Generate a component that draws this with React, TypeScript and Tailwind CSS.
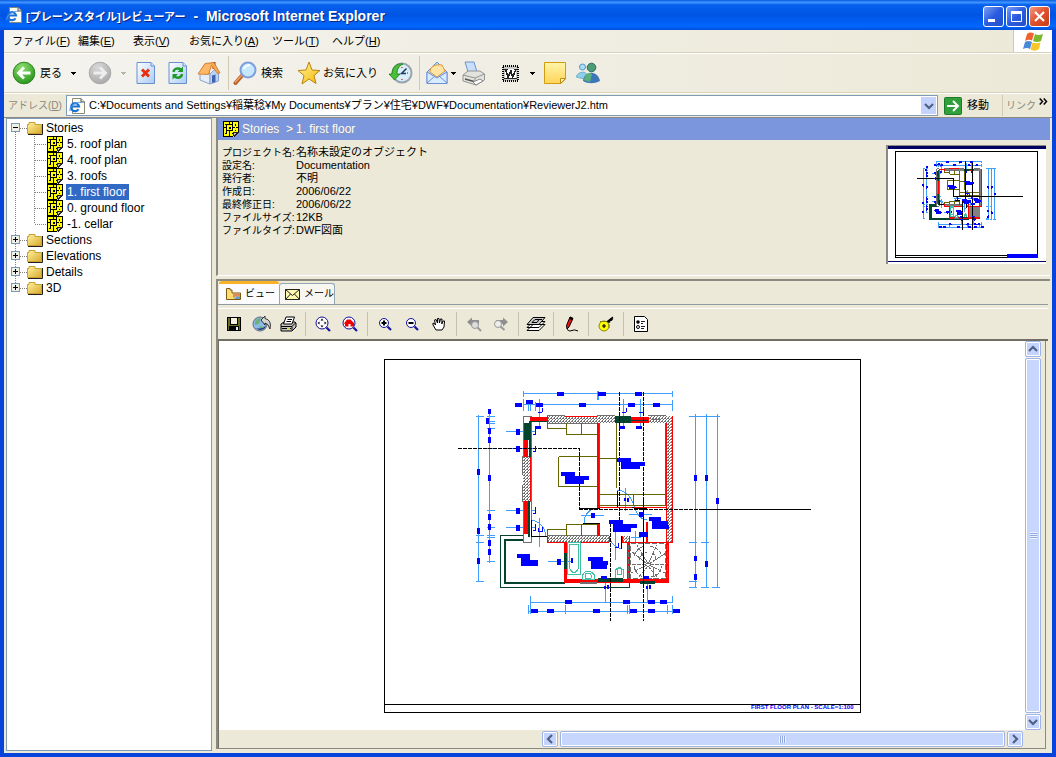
import React from "react";

type Box = [number, number, number, number];

/* ---------- floor plan ---------- */

const DIM = "#3f9fff";
const GREEN = "#04432f";
const OLIVE = "#666600";
const TEAL = "#40bfa5";

const smallTags: Box[] = [
  [557, 392, 7, 4], [598, 392, 8, 4], [635, 392, 7, 4], [515, 403, 7, 4], [526, 400, 7, 4], [536, 403, 7, 4],
  [579, 403, 7, 4], [628, 403, 7, 4], [653, 403, 7, 4], [535, 426, 6, 3], [619, 426, 6, 3], [636, 426, 6, 3],
  [477, 469, 3, 6], [477, 528, 3, 6], [477, 558, 3, 6], [488, 409, 3, 5], [486, 418, 3, 6], [488, 428, 3, 6],
  [488, 437, 3, 6], [488, 475, 3, 6], [488, 514, 3, 6], [488, 524, 3, 6], [488, 540, 3, 6], [488, 549, 3, 6],
  [516, 429, 4, 6], [516, 446, 4, 6], [516, 508, 4, 6], [516, 525, 4, 6], [557, 559, 4, 6], [571, 558, 2, 5],
  [694, 475, 3, 6], [705, 475, 3, 6], [716, 498, 3, 6], [694, 556, 3, 5], [705, 561, 3, 6], [694, 574, 3, 6],
  [565, 600, 7, 4], [623, 600, 7, 4], [648, 600, 7, 4], [660, 600, 7, 4], [531, 609, 7, 4], [547, 609, 7, 4],
  [593, 609, 7, 4], [630, 609, 7, 4], [648, 609, 7, 4], [673, 609, 7, 4], [601, 576, 6, 3], [643, 576, 6, 3],
  [591, 513, 4, 5], [639, 512, 5, 5], [639, 532, 9, 5], [604, 586, 2, 3], [607, 585, 2, 4], [646, 586, 2, 3],
  [649, 585, 2, 4], [624, 498, 2, 3], [627, 498, 2, 4],
];

const roomTags: Box[] = [
  [561, 472, 14, 4], [565, 476, 24, 4], [565, 480, 19, 4], [617, 458, 14, 4], [621, 462, 24, 4], [621, 466, 19, 3],
  [517, 554, 13, 4], [521, 558, 9, 4], [521, 560, 17, 6], [588, 557, 15, 4], [591, 561, 17, 4], [591, 564, 16, 5],
  [609, 520, 14, 4], [613, 524, 24, 4], [613, 528, 18, 4], [649, 517, 12, 4], [652, 521, 16, 4], [652, 525, 17, 4],
];

const dimPath = [
  "M523 393.5H673M523 404.5H673M523.5 391V397M523.5 399V411M528.5 404V411M530.5 404V411M535.5 402V411",
  "M597.5 391V400M598.5 391V400M672.5 391V397M672.5 400V411M539.5 399V428M623.5 399V427M640.5 399V427",
  "M478.5 415V582M476 416.5H484M476 535.5H484M476 542.5H484M476 581.5H484",
  "M489.5 409V563M487 416.5H495M487 421.5H495M487 423.5H495M487 428.5H495M487 448.5H495M487 510.5H495M487 527.5H495M487 535.5H495M487 537.5H495M487 561.5H495",
  "M506 431.5H536M506 448.5H536M506 510.5H536M506 527.5H536M539.5 518V547M548 561.5H572",
  "M695.5 414V588M706.5 414V588M717.5 414V588",
  "M689 416.5H720M689 542.5H697M701 542.5H709M689 581.5H697M689 587.5H697M701 587.5H709M712 587.5H720",
  "M530 602.5H673M528 611.5H680M530.5 596V614M528.5 605V614M565.5 605V614M605.5 579V603M647.5 579V603M672.5 596V603M627.5 605V614M629.5 605V614M667.5 605V614M672.5 605V614",
  "M581 515.5H604M629 514.5H652M625.5 488V511M615.5 532V560M635.5 531V542M631 537.5H641",
  "M531 520Q544 522 546 536M584 523Q584 510 598 508M617 490Q628 490 634 505Q638 520 647 520M609 536Q611 546 621 549",
].join("");

const hookPath =
  "M538 412.5H542M542.5 408V412M622 412.5H626M626.5 408V412M639 412.5H643M643.5 408V412M533 434.5H536M535.5 429V434M533 451.5H536M535.5 446V451M533 513.5H536M535.5 507V513M533 530.5H536M535.5 524V530M538 531.5H543M542.5 527V531M538.5 528V531M615 547.5H619M618.5 543V547";

const stairPath =
  "M648 564L637 545M648 564L657 545M647 564L631 551M649 564L666 553M646 564H630M650 564H666M647 565L631 573M649 565L665 573M648 566L637 579M648 566L659 579M643.5 568V579M653.5 568V579M634 556Q637 548 645 546M650 546Q659 548 662 556M634 566Q636 576 645 577M651 577Q660 576 662 566M639 560Q641 553 647 552M656 560Q655 553 650 552";

function Plan({ small, className }: { small?: boolean; className: string }) {
  const hatched: Box[] = [
    [523, 456, 8, 45], [547, 416, 51, 7], [598, 416, 17, 7], [649, 416, 23, 7], [666, 423, 6, 119],
    [547, 536, 62, 6], [622, 536, 7, 6],
  ];
  return (
    <svg
      viewBox="384 359 477 354"
      className={className}
      shapeRendering="crispEdges"
      fill="none"
      role="img"
      aria-label="First floor plan"
    >
      <defs>
        <pattern id="hatch" width="3" height="3" patternUnits="userSpaceOnUse">
          <rect width="3" height="3" fill="#fff" />
          <path d="M2 0h1v1h-1zM1 1h1v1h-1zM0 2h1v1h-1zM2 1h1v1h-1z" fill="#707070" />
        </pattern>
      </defs>
      <rect x="384.5" y="359.5" width="476" height="353" fill="#fff" stroke="#000" />
      <path d="M384 704.5H861" stroke="#000" />
      <path d="M523.5 535.5H500.5V587.5H629.5V583" stroke={GREEN} />
      <path d="M523 540H505V583H565" stroke={GREEN} strokeWidth="2" />
      <path d={dimPath} stroke={DIM} />
      <rect x="523.5" y="416.5" width="8" height="126" stroke="#707070" fill="#fff" />
      {hatched.map((b, i) => (
        <rect key={i} x={b[0]} y={b[1]} width={b[2]} height={b[3]} fill={small ? "#808080" : "url(#hatch)"} />
      ))}
      <path d="M547 415.5H565M597 415.5H615M648 415.5H666M522.5 456V475M522.5 485V502M531 456.5H523M531 501.5H523M547 423.5H598M547 535.5H609" stroke="#707070" />
      <path d="M565 416.5H597M666.5 423V542M672.5 416V543M530.5 457V501M547 542.5H609M622 542.5H672M547.5 416V423M547.5 536V542M600 507.5H666M609.5 536V542M622.5 536V542M629.5 536V542" stroke="#f00" />
      <path d="M600 505.5H617M633 505.5H666M651 419.5H660" stroke="#707070" />
      <path d="M524 423h6v17h-6zM529 421h2v36h-2zM528 501h2v36h-2zM530 421h17v1h-17zM615 416h16v7h-16z" fill={GREEN} />
      <path d="M524 440h4v17h-4zM530 417h17v4h-17zM524 501h4v33h-4zM631 417h18v6h-18zM597 423h3v85h-3zM597 524h3v12h-3zM646 522h2v20h-2zM564 542h3v40h-3zM564 579h105v4h-105zM666 542h3v41h-3zM627 542h3v38h-3z" fill="#f00" />
      <path d="M564 553h3v16h-3zM598 578h25v4h-25zM640 581h15v3h-15z" fill={GREEN} />
      <path d="M631 420.5H648" stroke={GREEN} />
      <path d="M580 582h17v2h-17z" fill="#707070" />
      <path
        d="M558.5 456.5H597M558.5 456.5V486.5H597M566.5 423V434.5H597M581.5 423V434M547.5 423V428.5H566M566.5 536V524.5H597M581.5 524V536M547.5 535V529.5H566M599.5 423V505M616.5 423V488M600 458.5H616M600 494.5H666M600 505.5H666M633.5 494V505M665.5 423V505"
        stroke={OLIVE}
      />
      <rect x="630" y="543" width="36" height="36" fill={small ? "#808080" : "#fff"} />
      {!small && (
        <>
          <path d="M630.5 543.5H665.5V578.5H630.5ZM628.5 545V578M667.5 545V578" stroke="#707070" strokeDasharray="5 2" />
          <path d={stairPath} stroke="#707070" strokeDasharray="4 1" />
        </>
      )}
      <path
        d="M567.5 542.5H580.5V574.5H567.5ZM569.5 544.5H578.5V568Q574 577 569.5 568ZM582.5 579V575Q588 567 594.5 575V579ZM585.5 578Q584 573 588 573Q592 573 591 578ZM615.5 578V570Q619 565 623.5 570V578M617.5 574H621.5V568H617.5Z"
        stroke={TEAL}
      />
      <path d="M531.5 520V536.5H547M583 523.5H600M617.5 491V507M632 507.5H634M621.5 536V549M634 508.5H647M600 508.5H580" stroke="#000" />
      <path d="M458 448.5H579.5V509.5M579 509.5H700M619.5 392V523.5H610.5V621M643.5 392V497M643.5 574V621" stroke="#000" strokeDasharray={small ? undefined : "4 1"} />
      <path d="M700 509.5H811M643.5 497V574" stroke="#000" />
      <g fill="#00f" stroke={small ? "#00f" : "none"} strokeWidth="1">
        {smallTags.map((b, i) => (
          <rect key={i} x={b[0]} y={b[1]} width={b[2]} height={b[3]} />
        ))}
        {roomTags.map((b, i) => (
          <rect key={i} x={b[0]} y={b[1]} width={b[2]} height={b[3]} />
        ))}
      </g>
      {small ? (
        <rect x="758" y="704" width="102" height="8" fill="#00f" stroke="#00f" />
      ) : (
        <>
          <path d={hookPath} stroke="#00f" />
          <text x="751" y="709" fill="#00f" className="font-['Liberation_Sans'] text-[6px] font-bold">
            FIRST FLOOR PLAN - SCALE=1:100
          </text>
        </>
      )}
    </svg>
  );
}

/* ---------- icons ---------- */

const PageE = () => (
  <svg width="16" height="16" viewBox="0 0 16 16" className="shrink-0">
    <path d="M3.500.5H12L15.500 4V15.500H3.500Z" fill="#fffef0" stroke="#8a8a7a" />
    <path d="M12 .5V4H15.500" fill="#ddd" stroke="#555" />
    <path d="M9.500 11.200A4 4 0 1 1 10 8.500H3.500" fill="none" stroke="#1c6fd8" strokeWidth="2.200" />
    <path d="M1 13C-1 9 8 3 12 4.500" fill="none" stroke="#4aa0ee" />
  </svg>
);

const PlanIcon = () => (
  <svg width="16" height="16" viewBox="0 0 16 16" className="shrink-0" shapeRendering="crispEdges" fill="none">
    <path d="M0 0H16V11L11 16H0Z" fill="#000" />
    <path d="M1 1H15V11L10 15H1Z" fill="#ff0" />
    <path d="M3.500 3.500H9.500V9.500H3.500ZM6.500 1V3M6.500 10V15M1 6.500H3M10 6.500H12M13 6.500H15M9.500 3V1M3.500 10V12" stroke="#000" />
    <path d="M6 6h2v2h-2zM2 3h1v1h-1zM12 3h1v2h-1zM2 12h2v1h-2zM9 12h1v1h-1zM12 9h1v1h-1z" fill="#000" />
    <path d="M10 16V11H16Z" fill="#c8c8c8" />
    <path d="M10.500 15V11.500H15M11 15.500L15.500 11" stroke="#222" />
  </svg>
);

const Folder = () => (
  <svg width="16" height="14" viewBox="0 0 16 14" className="shrink-0">
    <defs>
      <linearGradient id="fold" x1="0" y1="0" x2="1" y2="1">
        <stop offset="0" stopColor="#fff3a0" />
        <stop offset="1" stopColor="#d9a92c" />
      </linearGradient>
    </defs>
    <path d="M1 13.500H15.500V3" stroke="#222" fill="none" />
    <path d="M.5 12.500V3.500L2 3.500V1.500H8V3.500H14.500V12.500Z" fill="url(#fold)" stroke="#c9a030" />
  </svg>
);

const Caret = ({ dim }: { dim?: boolean }) => (
  <svg width="5" height="3" viewBox="0 0 5 3" className="shrink-0" shapeRendering="crispEdges">
    <path d="M0 0H5V1H4V2H3V3H2V2H1V1H0Z" fill={dim ? "#b8b5a6" : "#000"} />
  </svg>
);

const RoundArrow = ({ forward }: { forward?: boolean }) => (
  <svg width="24" height="24" viewBox="0 0 24 24" className="shrink-0">
    <defs>
      <radialGradient id={forward ? "ra1" : "ra0"} cx=".4" cy=".25" r=".8">
        <stop offset="0" stopColor={forward ? "#d8d8d8" : "#8be070"} />
        <stop offset="1" stopColor={forward ? "#a8a8a8" : "#259418"} />
      </radialGradient>
    </defs>
    <circle cx="12" cy="12" r="10.800" fill={`url(#${forward ? "ra1" : "ra0"})`} stroke={forward ? "#aaa" : "#2c8420"} />
    <path
      d={forward ? "M5.500 12H17M12 6.500L17.500 12L12 17.500" : "M18.500 12H7M12 6.500L6.500 12L12 17.500"}
      fill="none"
      stroke={forward ? "#eee" : "#fff"}
      strokeWidth="2.800"
    />
  </svg>
);

const Sheet = ({ children }: { children: React.ReactNode }) => (
  <svg width="20" height="24" viewBox="0 0 20 24">
    <defs>
      <linearGradient id="sheet" x1="0" y1="0" x2="1" y2="1">
        <stop offset="0" stopColor="#fff" />
        <stop offset="1" stopColor="#a9ccf5" />
      </linearGradient>
    </defs>
    <path d="M1 1.500H15L18.500 5V22.500H1Z" fill="url(#sheet)" stroke="#6a8fd0" />
    <path d="M15 1.500V5H18.500" fill="#d5e5ff" stroke="#6a8fd0" />
    {children}
  </svg>
);

const Home = () => (
  <svg width="24" height="24" viewBox="0 0 24 24">
    <path d="M15.500 1H18.500V8H15.500Z" fill="#c33a1c" />
    <path d="M3 13L9 6L13 13V23L3 19Z" fill="#e6eefc" stroke="#8ca2cc" />
    <path d="M13 13L18 8L21.500 12V20L13 23Z" fill="#bcd3f4" stroke="#8ca2cc" />
    <path d="M15 14.500L18.500 13.500V21L15 22Z" fill="#3e64b0" />
    <path d="M1 13L8 2.500L17 1.500L23 12L20.500 12.500L14.500 4.500L11.500 13.500Z" fill="#f5a84c" stroke="#c4742c" strokeWidth=".8" />
    <path d="M2 12.500L8.500 3.500L14 3L11 12.500Z" fill="#ffb866" />
  </svg>
);

const Search = () => (
  <svg width="24" height="24" viewBox="0 0 24 24" className="shrink-0">
    <path d="M9.500 14L2.500 22" stroke="#b8622c" strokeWidth="4" strokeLinecap="round" />
    <path d="M9 14L2.500 21" stroke="#f0a060" strokeWidth="1.500" strokeLinecap="round" />
    <circle cx="15" cy="9" r="7.500" fill="#c6e8ff" stroke="#7f9fdc" strokeWidth="2" />
    <path d="M11 8A5 5 0 0 1 17 4.500" stroke="#fff" strokeWidth="2" fill="none" />
  </svg>
);

const Star = () => (
  <svg width="24" height="24" viewBox="0 0 24 24" className="shrink-0">
    <defs>
      <linearGradient id="star" x1="0" y1="0" x2="1" y2="1">
        <stop offset="0" stopColor="#fff6a0" />
        <stop offset="1" stopColor="#f7b500" />
      </linearGradient>
    </defs>
    <path d="M12 1L15 9L23 9.500L17 14.500L19 22.500L12 18L5 23L7 14.500L1 9.500L9 9Z" fill="url(#star)" stroke="#b88410" strokeLinejoin="round" />
  </svg>
);

const History = () => (
  <svg width="25" height="24" viewBox="0 0 25 24">
    <circle cx="14" cy="12" r="9.500" fill="#d8eef8" stroke="#98a4b0" strokeWidth="2" />
    <path d="M14 6V7M19 12H20M14 18V19" stroke="#e04020" strokeWidth="1.500" />
    <path d="M18.500 7.500L13.500 12.500H18" stroke="#223a60" strokeWidth="1.500" fill="none" />
    <path d="M1 13H4C4 6 9 2 15 3C11 5 9 8 9 13H12L6.500 19Z" fill="#4bbf3c" stroke="#1d7a18" strokeWidth=".8" />
  </svg>
);

const Mail = () => (
  <svg width="22" height="24" viewBox="0 0 22 24">
    <path d="M1 11L11 1L21 11V22.500H1Z" fill="#b6d8fb" stroke="#6f8fd8" />
    <path d="M4 11C4 5 10 3 16 4L19 10L11 16Z" fill="#ffe4a8" stroke="#dc9a38" />
    <path d="M1 11L11 17L21 11V22.500H1Z" fill="#d8ecff" stroke="#6f8fd8" />
    <path d="M1 22L9 15M21 22L13 15" stroke="#6f8fd8" />
  </svg>
);

const Printer = () => (
  <svg width="24" height="25" viewBox="0 0 24 25">
    <path d="M3 1L12 1L15 11H6Z" fill="#c8defb" stroke="#6f92d4" />
    <path d="M1 14L6 10H18L22.500 13V19L14 24L1 20Z" fill="#e2e2de" stroke="#95958f" />
    <path d="M1 14L13 17L22.500 13M13 17V23" fill="none" stroke="#95958f" />
    <path d="M3 18L12 20.500" stroke="#555" strokeWidth="1.500" />
    <path d="M11 21L18 18L21 20L14 24Z" fill="#fff" stroke="#888" />
  </svg>
);

const Word = () => (
  <svg width="17" height="17" viewBox="0 0 17 17" shapeRendering="crispEdges">
    <rect x="1" y="1" width="15" height="15" fill="#c9c9c9" />
    <rect x="1" y="1" width="15" height="15" fill="none" stroke="#000" strokeWidth="2" strokeDasharray="1 1" />
    <path d="M3 4H14V13H3Z" fill="#fff" />
    <path d="M3.500 4.500L6 12L9 6L10.500 12L14 4.500M2 4.500H6M12 4.500H15M2 13.500H15" stroke="#222" strokeWidth="1.600" fill="none" />
  </svg>
);

const Note = () => (
  <svg width="22" height="22" viewBox="0 0 22 22">
    <defs>
      <linearGradient id="note" x1="0" y1="0" x2="0" y2="1">
        <stop offset="0" stopColor="#fff6a8" />
        <stop offset="1" stopColor="#ffd358" />
      </linearGradient>
    </defs>
    <path d="M.5.5H21.500V17L17 21.500H.5Z" fill="url(#note)" stroke="#d09c10" />
    <path d="M16.500 21.500V16.500H21.500Z" fill="#fff6b8" stroke="#c08c10" />
  </svg>
);

const People = () => (
  <svg width="24" height="22" viewBox="0 0 24 22">
    <circle cx="6.500" cy="5" r="3" fill="#a9dcf6" stroke="#5c96c8" />
    <path d="M0 15C2 9 11 8 12 15L8 17Z" fill="#8fd0e8" stroke="#4f98b8" strokeWidth=".6" />
    <circle cx="15.500" cy="5.500" r="4.300" fill="#4c9c74" stroke="#2c6a6a" />
    <path d="M7 19C8 8 22 8 24 19C18 22 12 22 7 19Z" fill="#3c78b8" />
    <path d="M8 18C9 11 14 10 16 12L14 20Z" fill="#5cb07c" />
  </svg>
);

const Flag = () => (
  <svg width="20" height="19" viewBox="0 0 20 19">
    <path d="M4 2Q7-.5 11 1.500L9 8.500Q6 7 2 9Z" fill="#ee6232" />
    <path d="M12 2Q15 4 20 2L18 9Q14 11 10 9Z" fill="#7cb82c" />
    <path d="M2 10Q5 8 9 10L7 17Q4 15 0 17Z" fill="#4a88d8" />
    <path d="M9.500 10.500Q13 12 17.500 10.500L16 17Q12 20 7.500 17.500Z" fill="#f8c628" />
  </svg>
);

const Chevron = ({ d }: { d: string }) => (
  <svg width="10" height="10" viewBox="0 0 10 10">
    <path d={d} fill="none" stroke="#4d6185" strokeWidth="2.200" />
  </svg>
);

const UP = "M1 7L5 3L9 7";
const DOWN = "M1 3L5 7L9 3";
const LEFT = "M7 1L3 5L7 9";
const RIGHT = "M3 1L7 5L3 9";

const Lens = ({ children }: { children?: React.ReactNode }) => (
  <>
    <circle cx="7" cy="7" r="6" fill="#fff" stroke="#1010a0" />
    {children}
    <path d="M11.500 11.500L15 15" stroke="#1515a0" strokeWidth="2.200" />
  </>
);

const SmallLens = ({ d }: { d: string }) => (
  <>
    <circle cx="7" cy="7" r="4.500" fill="#fff" stroke="#1010a0" />
    <path d={d} stroke="#000" strokeWidth="2" />
    <path d="M10.500 10.500L14 14" stroke="#1515a0" strokeWidth="2.200" />
  </>
);

const tools: ({ name: string; art: React.ReactNode } | null)[] = [
  {
    name: "Save",
    art: (
      <g shapeRendering="crispEdges">
        <path d="M1 1H15V15H1Z" fill="#000" />
        <path d="M2 2h2v7h8v-7h2v12h-1v-4h-10v4h-1z" fill="#6c6c1c" />
        <path d="M5 2H11V8H5Z" fill="#f4f0e0" />
        <path d="M10 11h2v3h-2z" fill="#eee" />
      </g>
    ),
  },
  {
    name: "Publish",
    art: (
      <>
        <circle cx="7" cy="8" r="7" fill="#8cbcea" stroke="#667" />
        <path d="M2 5Q5 1 8 3L6 8L2 9ZM6 10L11 11L8 15Z" fill="#6fb080" />
        <path d="M3 12Q7 16 12 12L13 9Q10 14 3 12Z" fill="#203878" />
        <path d="M8 4L12 0V2.500Q19 4 17 13Q15 7 12 7V9Z" fill="#d4d4d4" stroke="#222" strokeWidth=".9" />
      </>
    ),
  },
  {
    name: "Print",
    art: (
      <>
        <path d="M1 8L4 6H15L16 7V11L12 15H1Z" fill="#c4c4bc" stroke="#000" />
        <path d="M6 1H14.500L12 8H3.500Z" fill="#fff" stroke="#000" />
        <path d="M7.500 3.500H12M6.500 5.500H11" stroke="#000" />
        <path d="M1 10.500H12L15.500 7M2 12.500H11M12 10.500V14" stroke="#000" fill="none" />
        <path d="M7 12.500H10" stroke="#dd0" />
      </>
    ),
  },
  null,
  {
    name: "Zoom to fit",
    art: (
      <Lens>
        <path d="M7 2.500L8.500 4.500H5.500ZM7 11.500L8.500 9.500H5.500ZM2.500 7L4.500 5.500V8.500ZM11.500 7L9.500 5.500V8.500Z" fill="#000" />
      </Lens>
    ),
  },
  {
    name: "Zoom to home",
    art: (
      <Lens>
        <path d="M2 7.500L5 3.500H8.500L12 7V10.500H8.500V8H6.500V10.500H3V8Z" fill="#f00000" />
      </Lens>
    ),
  },
  null,
  { name: "Zoom in", art: <SmallLens d="M7 4.500V9.500M4.500 7H9.500" /> },
  { name: "Zoom out", art: <SmallLens d="M4.500 7H9.500" /> },
  {
    name: "Pan",
    art: (
      <path
        d="M5 14L2 9V7L4 8L4.500 9L3.500 4L5 3.500L6.500 7L6.500 2.500H8L8.500 7L9.500 3H11L10.800 8L12 5H13.500L13 11L11 14Z"
        fill="#fff"
        stroke="#000"
      />
    ),
  },
  null,
  { name: "Previous view", art: <><path d="M1 6L6 1.500V4H13V8H6V10.500Z" fill="#8f8f8f" /><circle cx="9" cy="9" r="3.500" fill="#ddd" stroke="#999" /><path d="M11.500 11.500L15 15" stroke="#999" strokeWidth="2" /></> },
  { name: "Next view", art: <><path d="M15 6L10 1.500V4H3V8H10V10.500Z" fill="#8f8f8f" /><circle cx="5" cy="8" r="3.500" fill="#eee" stroke="#999" /><path d="M7.500 10.500L11.500 14" stroke="#999" strokeWidth="2" /></> },
  null,
  {
    name: "Layers",
    art: (
      <g transform="translate(-2 0)" stroke="#000" fill="#fff">
        <path d="M1 14.500H13L19 8.500H7ZM1 11.500H13L19 5.500H7Z" />
        <path d="M1 8.500H13L19 1.500H7Z" fill="#c8c8c8" />
        <path d="M6 6.500L9 3.500H13L11 6.500ZM13 3.500H16" fill="none" />
      </g>
    ),
  },
  null,
  {
    name: "Markup",
    art: (
      <>
        <path d="M7 1L10 2.500L6 11L4 13L3.500 9.500Z" fill="#f01010" stroke="#000" />
        <path d="M7.500.5L10 2L9 4L6.500 3Z" fill="#000" />
        <path d="M4 13.500Q7 16 9 14.500T15 15" fill="none" stroke="#000" />
      </>
    ),
  },
  null,
  {
    name: "Measure",
    art: (
      <>
        <path d="M8 6.500L15 1M10 6.500L15 2.500M10 4.500L12 6.500M12 2.500L14 4.500" stroke="#000" strokeWidth="1.300" />
        <circle cx="6" cy="10" r="5" fill="#ff0" stroke="#888800" />
        <path d="M6 8V12M4 10H8" stroke="#000" strokeWidth="1.200" />
        <path d="M2 5.500H8M11 8V12" stroke="#888800" />
      </>
    ),
  },
  null,
  {
    name: "Properties",
    art: (
      <g>
        <path d="M1.500.5H11.500L14.500 3.500V15.500H1.500Z" fill="#fff" stroke="#000" />
        <circle cx="5" cy="6" r="1.800" fill="#000" />
        <circle cx="5" cy="11" r="1.500" fill="#fff" stroke="#000" />
        <path d="M8 5.500H12M8 7.500H10M8 10.500H12M8 12.500H11" stroke="#222" />
      </g>
    ),
  },
];

/* ---------- tree ---------- */

function Branch({ open, first, last }: { open?: boolean; first?: boolean; last?: boolean }) {
  return (
    <svg width="20" height="16" viewBox="0 0 20 16" className="shrink-0" shapeRendering="crispEdges">
      <path d={`M8.5 ${first ? 8 : 0}V${last ? 8 : 16}M13 8.500H20`} stroke="#808080" strokeDasharray="1 1" />
      <rect x="4.500" y="3.500" width="8" height="8" fill="#f0efe8" stroke="#7c98b8" />
      <path d={open ? "M6 7.500H11" : "M6 7.500H11M8.500 5V10"} stroke="#000" />
    </svg>
  );
}
function Leaf({ last }: { last: boolean }) {
  return (
    <svg width="40" height="16" viewBox="0 0 40 16" className="shrink-0" shapeRendering="crispEdges">
      <path d={`M8.500 0V16M27.500 0V${last ? 8 : 16}M28 8.500H40`} stroke="#808080" strokeDasharray="1 1" />
    </svg>
  );
}

const floors = ["5. roof plan", "4. roof plan", "3. roofs", "1. first floor", "0. ground floor", "-1. cellar"];
const groups = ["Sections", "Elevations", "Details", "3D"];

const info: [string, string][] = [
  ["プロジェクト名:", "名称未設定のオブジェクト"],
  ["設定名:", "Documentation"],
  ["発行者:", "不明"],
  ["作成日:", "2006/06/22"],
  ["最終修正日:", "2006/06/22"],
  ["ファイルサイズ:", "12KB"],
  ["ファイルタイプ:", "DWF図面"],
];

const menus: [string, string][] = [
  ["ファイル", "F"],
  ["編集", "E"],
  ["表示", "V"],
  ["お気に入り", "A"],
  ["ツール", "T"],
  ["ヘルプ", "H"],
];

const iconBtn = "flex shrink-0 items-center justify-center";
const scrollBtn =
  "flex h-4 w-4 shrink-0 items-center justify-center rounded-[2px] border border-[#9fb5e8] bg-[#c3d3fd] shadow-[inset_0_0_0_1px_#fff]";
const winBtn = "flex h-[21px] w-[21px] items-center justify-center rounded-[3px] border border-white";
const Sep = () => <span className="h-[34px] w-px shrink-0 bg-[#cfcab4]" />;

export default function App() {
  return (
    <div className="flex min-h-screen flex-col bg-[#0844dc] font-['Liberation_Sans','Noto_Sans_CJK_JP',sans-serif] text-xs text-black">
      <header className="flex h-[30px] items-center gap-1 bg-[linear-gradient(#0a5be0_0%,#3f97ff_8%,#0660ee_16%,#0054e3_50%,#0066ff_88%,#0050d8_100%)] pl-[6px] pr-[6px] text-white">
        <PageE />
        <h1 className="flex grow items-baseline gap-2 pt-[3px] text-sm font-bold leading-4 [text-shadow:1px_1px_0_#0a2a88]">
          <span className="text-[11px]">[プレーンスタイル]レビューアー</span>
          <span>- &nbsp;Microsoft Internet Explorer</span>
        </h1>
        <div className="flex gap-[2px] pt-[3px]">
          <button aria-label="Minimize" className={`${winBtn} bg-[linear-gradient(135deg,#7ba0f4,#2a5be0_50%,#2450c8)]`}>
            <svg width="19" height="19"><path d="M4 12H11V15H4Z" fill="#fff" /></svg>
          </button>
          <button aria-label="Maximize" className={`${winBtn} bg-[linear-gradient(135deg,#7ba0f4,#2a5be0_50%,#2450c8)]`}>
            <svg width="19" height="19"><path d="M4.500 5H14.500V14.500H4.500Z" fill="none" stroke="#fff" /><path d="M4 4H15V7H4Z" fill="#fff" /></svg>
          </button>
          <button aria-label="Close" className={`${winBtn} bg-[linear-gradient(135deg,#f09a80,#e0502c_50%,#c83c18)]`}>
            <svg width="19" height="19"><path d="M5 5L14 14M14 5L5 14" stroke="#fff" strokeWidth="2.200" /></svg>
          </button>
        </div>
      </header>

      <div className="mx-1 mb-1 flex grow flex-col bg-[#ece9d8]">
        <div className="flex h-[23px] border-b border-[#d8d2bd] bg-[linear-gradient(90deg,#f4f3ee,#ece9d8)]">
          <nav className="grid grow grid-cols-[66px_55px_56px_83px_60px_60px] items-center pl-2 text-left text-[11px]">
            {menus.map(([label, key]) => (
              <button key={key} className="whitespace-nowrap text-left leading-4">
                {label}(<u>{key}</u>)
              </button>
            ))}
          </nav>
          <div className="flex w-[39px] items-center justify-center border-l border-[#cfcab4] bg-white">
            <Flag />
          </div>
        </div>

        <div className="flex h-10 items-center border-b border-t border-b-[#d8d2bd] border-t-white bg-[linear-gradient(90deg,#f4f3ee,#ece9d8)] pl-2 text-[11px]">
          <button className="flex w-[54px] shrink-0 items-center gap-1"><RoundArrow />戻る</button>
          <button aria-label="Back history" className={`${iconBtn} w-[14px]`}><Caret /></button>
          <button aria-label="Forward" className={`${iconBtn} w-10`}><RoundArrow forward /></button>
          <button aria-label="Forward history" className={`${iconBtn} w-[6px]`}><Caret dim /></button>
          <button aria-label="Stop" className={`${iconBtn} w-10`}>
            <Sheet><path d="M6 8.500L13 15.500M13 8.500L6 15.500" stroke="#e83010" strokeWidth="3" /></Sheet>
          </button>
          <button aria-label="Refresh" className={`${iconBtn} w-6`}>
            <Sheet>
              <path d="M5.500 11C6 7.500 10 6.500 13 8.500M14 13C13.500 17 9 17.500 6.500 15.500" stroke="#1f9a28" strokeWidth="2.400" fill="none" />
              <path d="M15 5.500V11H9.500ZM4.500 18.500V13H10Z" fill="#1f9a28" />
            </Sheet>
          </button>
          <button aria-label="Home" className={`${iconBtn} w-[38px]`}><Home /></button>
          <Sep />
          <button className="flex w-[66px] shrink-0 items-center gap-1 pl-1"><Search />検索</button>
          <button className="flex w-[86px] shrink-0 items-center gap-[2px] whitespace-nowrap pl-[2px]"><Star />お気に入り</button>
          <button aria-label="History" className={`${iconBtn} w-[38px]`}><History /></button>
          <Sep />
          <button aria-label="Mail" className={`${iconBtn} ml-1 w-[26px]`}><Mail /></button>
          <button aria-label="Mail options" className={`${iconBtn} w-[6px]`}><Caret /></button>
          <button aria-label="Print page" className={`${iconBtn} w-9`}><Printer /></button>
          <button aria-label="Edit with Word" className={`${iconBtn} w-9`}><Word /></button>
          <button aria-label="Edit options" className={`${iconBtn} w-2`}><Caret /></button>
          <button aria-label="Discuss" className={`${iconBtn} w-[38px]`}><Note /></button>
          <button aria-label="Messenger" className={`${iconBtn} w-7`}><People /></button>
        </div>

        <div className="flex h-6 items-center border-t border-white text-[11px]">
          <label htmlFor="address" className="w-[62px] shrink-0 whitespace-nowrap pl-1 text-[10px] text-[#8a8778]">
            アドレス(<u>D</u>)
          </label>
          <div className="flex h-[21px] grow items-center border border-[#7f9db9] bg-white pl-[2px]">
            <PageE />
            <input
              id="address"
              className="min-w-0 grow bg-transparent pl-1 text-[11px] outline-none"
              defaultValue="C:¥Documents and Settings¥稲葉稔¥My Documents¥プラン¥住宅¥DWF¥Documentation¥ReviewerJ2.htm"
            />
            <button aria-label="Address list" className="mr-px flex h-[17px] w-[15px] items-center justify-center bg-[#c3d3fd]">
              <Chevron d={DOWN} />
            </button>
          </div>
          <button className="ml-[6px] flex w-[58px] shrink-0 items-center gap-[5px]">
            <svg width="18" height="18" viewBox="0 0 18 18">
              <rect x=".5" y=".5" width="17" height="17" rx="1" fill="#2fa03a" stroke="#1c7a28" />
              <path d="M3 9H14M9 4L14 9L9 14" stroke="#fff" strokeWidth="2" fill="none" />
            </svg>
            移動
          </button>
          <div className="flex h-[21px] w-[50px] shrink-0 items-center justify-between border-l border-[#cfcab4] pl-[3px] pr-1 text-[10px] text-[#8a8778]">
            <span>リンク</span>
            <button aria-label="More links" className="mb-2">
              <svg width="9" height="7" viewBox="0 0 9 7"><path d="M.7.500L3.500 3.500L.7 6.500M4.700.500L7.500 3.500L4.700 6.500" stroke="#000" strokeWidth="1.500" fill="none" /></svg>
            </button>
          </div>
        </div>

        <main className="flex grow border-t border-[#8b8a80] pb-[2px] pl-[2px] pr-[2px]">
          <aside className="w-[206px] shrink-0 border border-[#7f9db9] bg-white pt-px">
            <ul className="leading-4">
              <li>
                <div className="flex h-4 items-center"><Branch open first /><Folder /><span className="pl-[3px]">Stories</span></div>
                <ul>
                  {floors.map((f, i) => (
                    <li key={f} className="flex h-4 items-center">
                      <Leaf last={i === floors.length - 1} />
                      <PlanIcon />
                      <a href="#plan" className={`ml-[3px] whitespace-nowrap pl-px pr-[3px] ${i === 3 ? "bg-[#316ac5] text-white" : ""}`}>{f}</a>
                    </li>
                  ))}
                </ul>
              </li>
              {groups.map((g, i) => (
                <li key={g} className="flex h-4 items-center">
                  <Branch last={i === groups.length - 1} /><Folder /><span className="pl-[3px]">{g}</span>
                </li>
              ))}
            </ul>
          </aside>

          <div className="ml-1 flex min-w-0 grow flex-col pb-[2px]">
            <section className="border-b border-l-2 border-b-white border-l-[#8b8a80]">
              <h2 className="flex h-[22px] items-center bg-[#7b96dd] pl-[5px] text-xs text-white [text-shadow:1px_1px_0_#8a92a8]">
                <PlanIcon />
                <span className="w-[47px] pl-[3px]">Stories</span>
                <span className="w-[10px]">&gt;</span>
                <span>1. first floor</span>
              </h2>
              <div className="flex h-[135px] justify-between pl-1 pr-1">
                <dl className="pt-[6px] text-[11px] leading-[13px]">
                  {info.map(([k, v]) => (
                    <div key={k} className="flex">
                      <dt className="w-[74px] shrink-0 whitespace-nowrap text-[10px] leading-[13px]">{k}</dt>
                      <dd>{v}</dd>
                    </div>
                  ))}
                </dl>
                <div className="mt-[5px] h-[119px] w-[160px] border-l-2 border-t border-[#8b8a80] bg-white">
                  <div className="h-[3px] bg-[#000060]" />
                  <Plan small className="mb-[3px] ml-[7px] mt-[2px] h-[107px] w-[143px] [&_path]:[vector-effect:non-scaling-stroke] [&_rect]:[vector-effect:non-scaling-stroke]" />
                  <div className="h-px bg-[#000060]" />
                </div>
              </div>
            </section>

            <section className="mt-[3px] flex grow flex-col border-l-2 border-t-2 border-[#8b8a80] pr-[2px]">
              <div role="tablist" className="flex items-end border-b border-[#8e9b9f] pl-px">
                <button role="tab" aria-selected="true" className="flex h-[23px] w-[60px] items-center gap-1 rounded-t-[3px] border-t-[3px] border-[#f9b228] bg-[#fcfcfe] pl-[7px] text-[10px]">
                  <svg width="15" height="12" viewBox="0 0 15 12"><path d="M.5.500H4V2H6V5H14.500V11.500H.5Z" fill="#ffdc70" stroke="#7a5a10" /><path d="M7 5.500H14V9L11 8L7 10Z" fill="#e08860" /><path d="M8 11H14V9L11 8Z" fill="#60a0d0" /></svg>
                  ビュー
                </button>
                <button role="tab" aria-selected="false" className="flex h-[21px] w-[56px] items-center gap-1 rounded-t-[3px] border border-b-0 border-[#91a7b4] bg-[#f7f6f0] pl-[5px] text-[10px]">
                  <svg width="15" height="11" viewBox="0 0 15 11" className="shrink-0"><path d="M.5.500H14.500V10.500H.5Z" fill="#fff9b0" stroke="#222" /><path d="M.5.500L7.500 6.500L14.500.500M.5 10.500L5.500 5M14.500 10.500L9.500 5" fill="none" stroke="#222" /></svg>
                  メール
                </button>
              </div>
              <div className="mt-[3px] flex h-[33px] items-center border-b-2 border-t border-b-[#716f64] border-t-white pl-[2px]">
                {tools.map((t, i) =>
                  t ? (
                    <button key={i} aria-label={t.name} className={`${iconBtn} h-7 w-[27px]`}>
                      <svg width="16" height="16" viewBox="0 0 16 16" className="overflow-visible" fill="none">{t.art}</svg>
                    </button>
                  ) : (
                    <span key={i} className="flex h-6 w-2 justify-center"><i className="w-px bg-[#c5c2b0]" /></span>
                  )
                )}
              </div>
              <div className="mr-[2px] flex grow border-r border-[#8b8a80] pr-1">
                <div className="flex min-w-0 grow flex-col border-l border-[#716f64]">
                  <div className="flex grow">
                    <div id="plan" className="flex grow justify-center bg-white pt-[18px]">
                      <Plan className="h-[354px] w-[477px] shrink-0" />
                    </div>
                    <div className="flex w-4 shrink-0 flex-col gap-px bg-[#f3f2ea]">
                      <button aria-label="Scroll up" className={scrollBtn}><Chevron d={UP} /></button>
                      <div className="flex grow items-center justify-center rounded-[2px] border border-[#9fb5e8] bg-[#c6d6fd] shadow-[inset_0_0_0_1px_#fff]">
                        <svg width="7" height="8"><path d="M0 .5H7M0 2.500H7M0 4.500H7M0 6.500H7" stroke="#eef3ff" /><path d="M0 1.500H7M0 3.500H7M0 5.500H7" stroke="#8fa8e0" /></svg>
                      </div>
                      <button aria-label="Scroll down" className={scrollBtn}><Chevron d={DOWN} /></button>
                    </div>
                  </div>
                  <div className="flex h-[18px] items-center pr-[18px]">
                    <span className="w-[323px] shrink-0" />
                    <button aria-label="Scroll left" className={scrollBtn}><Chevron d={LEFT} /></button>
                    <div className="mx-[2px] flex h-4 grow items-center justify-center rounded-[2px] border border-[#9fb5e8] bg-[#c6d6fd] shadow-[inset_0_0_0_1px_#fff]">
                      <svg width="8" height="7"><path d="M.5 0V7M2.500 0V7M4.500 0V7M6.500 0V7" stroke="#eef3ff" /><path d="M1.500 0V7M3.500 0V7M5.500 0V7" stroke="#8fa8e0" /></svg>
                    </div>
                    <button aria-label="Scroll right" className={scrollBtn}><Chevron d={RIGHT} /></button>
                  </div>
                </div>
              </div>
              <div className="mr-[2px] h-px bg-[#8b8a80]" />
            </section>
          </div>
        </main>
      </div>
    </div>
  );
}
